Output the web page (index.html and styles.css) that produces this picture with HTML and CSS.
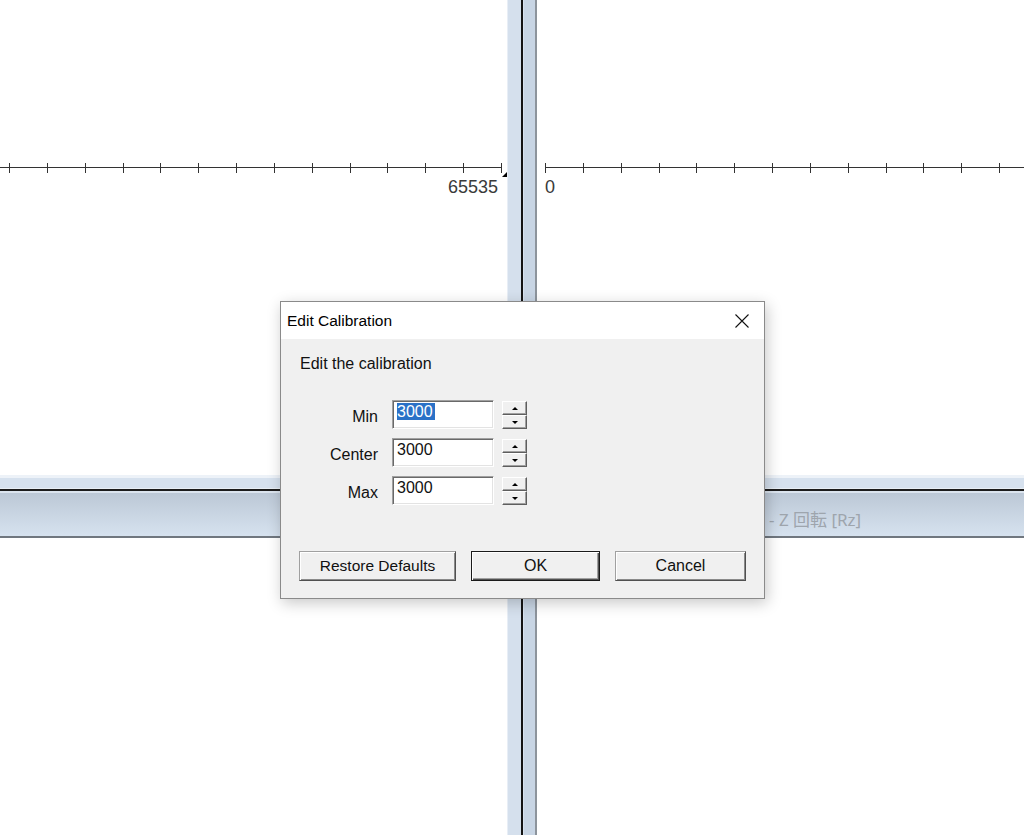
FILE: index.html
```html
<!DOCTYPE html>
<html lang="en">
<head>
    <meta charset="UTF-8">
    <meta name="viewport" content="width=device-width, initial-scale=1.0">
    <title>Edit Calibration</title>
    <link rel="stylesheet" href="styles.css">
</head>
<body>
<div class="axis-view">
    <div class="pane pane-left">
        <div class="ruler-row">
            <div class="ruler ruler-left">
                <span class="tick"></span><span class="tick"></span><span class="tick"></span><span class="tick"></span>
                <span class="tick"></span><span class="tick"></span><span class="tick"></span><span class="tick"></span>
                <span class="tick"></span><span class="tick"></span><span class="tick"></span><span class="tick"></span>
                <span class="tick"></span><span class="tick"></span>
            </div>
            <span class="marker"></span>
        </div>
        <div class="ruler-label">65535</div>
    </div>
    <div class="v-bar"></div>
    <div class="pane pane-right">
        <div class="ruler ruler-right">
            <span class="tick"></span><span class="tick"></span><span class="tick"></span><span class="tick"></span>
            <span class="tick"></span><span class="tick"></span><span class="tick"></span><span class="tick"></span>
            <span class="tick"></span><span class="tick"></span><span class="tick"></span><span class="tick"></span>
            <span class="tick"></span>
        </div>
        <div class="ruler-label">0</div>
    </div>
    <div class="h-bar"></div>
    <div class="h-bar-label">- Z 回転 [Rz]</div>
</div>

<div class="dialog">
    <div class="dialog-title">
        <span>Edit Calibration</span>
        <svg class="close-icon" width="14" height="14" viewBox="0 0 14 14">
            <path d="M0.5 0.5 L13.5 13.5 M13.5 0.5 L0.5 13.5" stroke="#111" stroke-width="1.1" fill="none"/>
        </svg>
    </div>
    <div class="dialog-body">
        <div class="intro">Edit the calibration</div>
        <div class="fields">
            <div class="field-row">
                <label class="field-label">Min</label>
                <div class="field"><span class="selected">3000</span></div>
                <div class="spin">
                    <button class="spin-btn" type="button"><span class="arrow-up"></span></button>
                    <button class="spin-btn" type="button"><span class="arrow-down"></span></button>
                </div>
            </div>
            <div class="field-row">
                <label class="field-label">Center</label>
                <div class="field"><span>3000</span></div>
                <div class="spin">
                    <button class="spin-btn" type="button"><span class="arrow-up"></span></button>
                    <button class="spin-btn" type="button"><span class="arrow-down"></span></button>
                </div>
            </div>
            <div class="field-row">
                <label class="field-label">Max</label>
                <div class="field"><span>3000</span></div>
                <div class="spin">
                    <button class="spin-btn" type="button"><span class="arrow-up"></span></button>
                    <button class="spin-btn" type="button"><span class="arrow-down"></span></button>
                </div>
            </div>
        </div>
        <div class="buttons">
            <button class="btn btn-restore" type="button">Restore Defaults</button>
            <button class="btn btn-ok" type="button">OK</button>
            <button class="btn btn-cancel" type="button">Cancel</button>
        </div>
    </div>
</div>
</body>
</html>
```

FILE: styles.css
```css
body {
    margin: 0;
    padding: 0;
    background: #fff;
    font-family: "Liberation Sans", Arial, sans-serif;
    overflow: hidden;
}

.axis-view {
    width: 1024px;
    height: 835px;
    display: grid;
    grid-template-columns: 507px 30px 1fr;
    grid-template-rows: 475px 63px 1fr;
    overflow: hidden;
}

.pane-left {
    grid-row: 1;
    grid-column: 1;
    padding-top: 163px;
}

.pane-right {
    grid-row: 1;
    grid-column: 3;
    padding-top: 163px;
}

.ruler-row {
    display: flex;
    align-items: flex-start;
}

.ruler {
    height: 10px;
    display: flex;
    background: linear-gradient(#333, #333) 0 4px / 100% 1px no-repeat;
}

.ruler-left {
    box-sizing: border-box;
    width: 502px;
    padding-left: 9px;
    justify-content: space-between;
}

.ruler-right {
    margin-left: 8px;
    gap: 36.85px;
}

.tick {
    width: 1px;
    height: 10px;
    background: #333;
    flex-shrink: 0;
}

.marker {
    margin-top: 9px;
    width: 0;
    height: 0;
    border-left: 5px solid transparent;
    border-bottom: 5px solid #000;
}

.ruler-label {
    font-size: 18px;
    line-height: 20px;
    color: #3a3a3a;
}

.pane-left .ruler-label {
    text-align: right;
    padding-right: 9px;
}

.pane-right .ruler-label {
    margin-top: 4px;
    padding-left: 8px;
}

.v-bar {
    grid-column: 2;
    grid-row: 1 / 4;
    background: linear-gradient(to right,
        #e8eef6 0 1px,
        #d5e0ed 1px 14px,
        #141414 14px 16px,
        #d8e2ee 16px 17px,
        #c8d5e4 17px 28px,
        #8d949c 28px 30px);
}

.h-bar {
    grid-column: 1 / 4;
    grid-row: 2;
    background: linear-gradient(to bottom,
        #edf2f8 0 3px,
        #d6e1ee 3px 13px,
        #e8eef5 13px 14px,
        #1c1c1c 14px 16px,
        #dbe4ee 16px 18px,
        #bcc8d6 18px,
        #d6e2ef 61px,
        #70777f 61px 63px);
}

.h-bar-label {
    grid-column: 3;
    grid-row: 2;
    padding: 34px 0 0 232px;
    font-family: "Noto Sans", "Noto Sans CJK JP", sans-serif;
    font-size: 17px;
    line-height: 22px;
    color: #9ea5ad;
    white-space: nowrap;
}

/* dialog */
.dialog {
    position: absolute;
    left: 280px;
    top: 301px;
    width: 485px;
    height: 298px;
    box-sizing: border-box;
    border: 1px solid #8a8a8a;
    background: #f0f0f0;
    box-shadow: 2px 4px 14px rgba(0, 0, 0, 0.22);
    display: flex;
    flex-direction: column;
}

.dialog-title {
    height: 37px;
    background: #fff;
    display: flex;
    align-items: center;
    justify-content: space-between;
    padding: 0 15px 0 6px;
    font-size: 15.5px;
    color: #000;
}

.dialog-body {
    padding: 16px 17px 0 18px;
    font-size: 16px;
    color: #111;
}

.intro {
    margin-left: 1px;
    line-height: 18px;
}

.fields {
    margin-top: 27px;
    display: flex;
    flex-direction: column;
    gap: 9px;
}

.field-row {
    display: flex;
    align-items: center;
    height: 29px;
}

.field-label {
    width: 79px;
    margin-right: 14px;
    text-align: right;
    padding-top: 4px;
}

.field {
    box-sizing: border-box;
    width: 102px;
    height: 29px;
    padding: 2px 4px;
    background: #fff;
    border: 1px solid;
    border-color: #a0a0a0 #fff #fff #a0a0a0;
    box-shadow: inset 1px 1px #696969, inset -1px -1px #e3e3e3;
    line-height: 18px;
}

.selected {
    background: #2a71c7;
    color: #fff;
    padding-right: 2px;
}

.spin {
    margin-left: 8px;
    display: flex;
    flex-direction: column;
    margin-top: 1px;
}

.spin-btn {
    box-sizing: border-box;
    width: 25px;
    height: 14px;
    padding: 0;
    background: #f0f0f0;
    border: 1px solid;
    border-color: #fff #5e5e5e #5e5e5e #fff;
    box-shadow: inset -1px -1px #a0a0a0;
    display: flex;
    align-items: center;
    justify-content: center;
}

.arrow-up {
    width: 0;
    height: 0;
    border-left: 3px solid transparent;
    border-right: 3px solid transparent;
    border-bottom: 3px solid #000;
}

.arrow-down {
    width: 0;
    height: 0;
    border-left: 3px solid transparent;
    border-right: 3px solid transparent;
    border-top: 3px solid #000;
}

.buttons {
    margin-top: 46px;
    display: flex;
    gap: 15px;
}

.btn {
    box-sizing: border-box;
    height: 30px;
    padding: 0;
    font-family: "Liberation Sans", Arial, sans-serif;
    font-size: 16px;
    color: #111;
    background: #f0f0f0;
    border: 1px solid;
    border-color: #a0a0a0 #505050 #505050 #a0a0a0;
    box-shadow: inset 1px 1px #fff, inset -1px -1px #8a8a8a;
}

.btn-restore {
    width: 157px;
    font-size: 15.5px;
}

.btn-ok {
    width: 129px;
    border-color: #1a1a1a;
    box-shadow: inset 1px 1px #fff, inset -1px -1px #505050, inset -2px -2px #a0a0a0;
}

.btn-cancel {
    width: 131px;
}
```
